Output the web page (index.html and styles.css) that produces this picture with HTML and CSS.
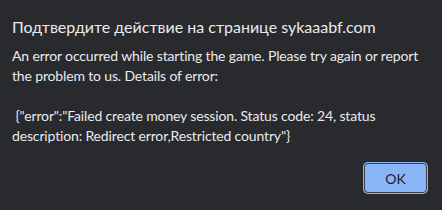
FILE: index.html
```
<!DOCTYPE html>
<html>
<head>
<meta charset="utf-8">
<link rel="stylesheet" href="styles.css">
</head>
<body>
<div class="dialog">
  <div class="title">Подтвердите действие на странице sykaaabf.com</div>
  <div class="message">An error occurred while starting the game. Please try again or report<br>the problem to us. Details of error:<br><br>&nbsp;{"error":"Failed create money session. Status code: 24, status<br>description: Redirect error,Restricted country"}</div>
  <div class="actions">
    <button class="ok">OK</button>
  </div>
</div>
</body>
</html>
```
FILE: styles.css
```
html, body {
  margin: 0;
  padding: 0;
  background: #292a2d;
}
.dialog {
  width: 442px;
  height: 210px;
  box-sizing: border-box;
  padding: 16px 15px 17px 12px;
  font-family: "Lato", "Noto Sans", sans-serif;
  color: #e8eaed;
  display: flex;
  flex-direction: column;
}
.title {
  font-size: 16px;
  line-height: 22px;
  white-space: nowrap;
}
.message {
  margin-top: 8px;
  font-size: 14px;
  line-height: 20px;
  letter-spacing: -0.15px;
  white-space: nowrap;
}
.actions {
  display: flex;
  justify-content: flex-end;
  margin-top: auto;
}
.ok {
  width: 63px;
  height: 30px;
  box-sizing: border-box;
  background: #8ab4f8;
  border: 1px solid #3c4043;
  border-radius: 4px;
  box-shadow: 0 0 0 1px #8ab4f8;
  color: #202124;
  font-family: "Lato", sans-serif;
  font-size: 14px;
  padding: 0;
}
```
